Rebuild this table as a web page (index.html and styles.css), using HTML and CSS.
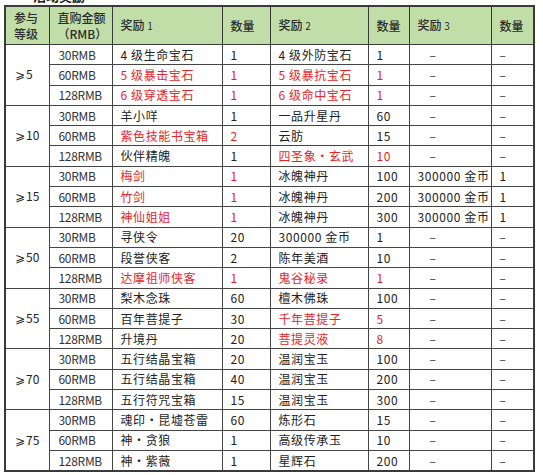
FILE: index.html
```html
<!DOCTYPE html>
<html lang="zh">
<head>
<meta charset="utf-8">
<link rel="stylesheet" href="styles.css">
</head>
<body>
<div class="caption"><span class="caption-text">活动奖励</span></div>
<table class="rewards">
  <colgroup>
    <col class="c1"><col class="c2"><col class="c3"><col class="c4"><col class="c5"><col class="c6"><col class="c7"><col class="c8">
  </colgroup>
  <thead>
    <tr>
      <th>参与<br>等级</th>
      <th>直购金额<br>（RMB）</th>
      <th>奖励 <span class="num">1</span></th>
      <th>数量</th>
      <th>奖励 <span class="num">2</span></th>
      <th>数量</th>
      <th>奖励 <span class="num">3</span></th>
      <th>数量</th>
    </tr>
  </thead>
  <tbody>
    <tr><td class="lvl" rowspan="3"><span class="ge">⩾</span>5</td><td class="rmb">30RMB</td><td>4 级生命宝石</td><td>1</td><td>4 级外防宝石</td><td>1</td><td class="dash3">–</td><td class="dash">–</td></tr>
    <tr><td class="rmb">60RMB</td><td class="red">5 级暴击宝石</td><td class="red">1</td><td class="red">5 级暴抗宝石</td><td class="red">1</td><td class="dash3">–</td><td class="dash">–</td></tr>
    <tr><td class="rmb">128RMB</td><td class="red">6 级穿透宝石</td><td class="red">1</td><td class="red">6 级命中宝石</td><td class="red">1</td><td class="dash3">–</td><td class="dash">–</td></tr>

    <tr><td class="lvl" rowspan="3"><span class="ge">⩾</span>10</td><td class="rmb">30RMB</td><td>羊小咩</td><td>1</td><td>一品升星丹</td><td>60</td><td class="dash3">–</td><td class="dash">–</td></tr>
    <tr><td class="rmb">60RMB</td><td class="red">紫色技能书宝箱</td><td class="red">2</td><td>云肪</td><td>15</td><td class="dash3">–</td><td class="dash">–</td></tr>
    <tr><td class="rmb">128RMB</td><td>伙伴精魄</td><td>1</td><td class="red">四圣象・玄武</td><td class="red">10</td><td class="dash3">–</td><td class="dash">–</td></tr>

    <tr><td class="lvl" rowspan="3"><span class="ge">⩾</span>15</td><td class="rmb">30RMB</td><td class="red">梅剑</td><td class="red">1</td><td>冰魄神丹</td><td>100</td><td>300000 金币</td><td>1</td></tr>
    <tr><td class="rmb">60RMB</td><td class="red">竹剑</td><td class="red">1</td><td>冰魄神丹</td><td>200</td><td>300000 金币</td><td>1</td></tr>
    <tr><td class="rmb">128RMB</td><td class="red">神仙姐姐</td><td class="red">1</td><td>冰魄神丹</td><td>300</td><td>300000 金币</td><td>1</td></tr>

    <tr><td class="lvl" rowspan="3"><span class="ge">⩾</span>50</td><td class="rmb">30RMB</td><td>寻侠令</td><td>20</td><td>300000 金币</td><td>1</td><td class="dash3">–</td><td class="dash">–</td></tr>
    <tr><td class="rmb">60RMB</td><td>段誉侠客</td><td>2</td><td>陈年美酒</td><td>10</td><td class="dash3">–</td><td class="dash">–</td></tr>
    <tr><td class="rmb">128RMB</td><td class="red">达摩祖师侠客</td><td class="red">1</td><td class="red">鬼谷秘录</td><td class="red">1</td><td class="dash3">–</td><td class="dash">–</td></tr>

    <tr><td class="lvl" rowspan="3"><span class="ge">⩾</span>55</td><td class="rmb">30RMB</td><td>梨木念珠</td><td>60</td><td>檀木佛珠</td><td>100</td><td class="dash3">–</td><td class="dash">–</td></tr>
    <tr><td class="rmb">60RMB</td><td>百年菩提子</td><td>30</td><td class="red">千年菩提子</td><td class="red">5</td><td class="dash3">–</td><td class="dash">–</td></tr>
    <tr><td class="rmb">128RMB</td><td>升境丹</td><td>20</td><td class="red">菩提灵液</td><td class="red">8</td><td class="dash3">–</td><td class="dash">–</td></tr>

    <tr><td class="lvl" rowspan="3"><span class="ge">⩾</span>70</td><td class="rmb">30RMB</td><td>五行结晶宝箱</td><td>20</td><td>温润宝玉</td><td>100</td><td class="dash3">–</td><td class="dash">–</td></tr>
    <tr><td class="rmb">60RMB</td><td>五行结晶宝箱</td><td>40</td><td>温润宝玉</td><td>200</td><td class="dash3">–</td><td class="dash">–</td></tr>
    <tr><td class="rmb">128RMB</td><td>五行符咒宝箱</td><td>15</td><td>温润宝玉</td><td>300</td><td class="dash3">–</td><td class="dash">–</td></tr>

    <tr><td class="lvl" rowspan="3"><span class="ge">⩾</span>75</td><td class="rmb">30RMB</td><td>魂印・昆墟苍雷</td><td>60</td><td>炼形石</td><td>15</td><td class="dash3">–</td><td class="dash">–</td></tr>
    <tr><td class="rmb">60RMB</td><td>神・贪狼</td><td>1</td><td>高级传承玉</td><td>10</td><td class="dash3">–</td><td class="dash">–</td></tr>
    <tr><td class="rmb">128RMB</td><td>神・紫薇</td><td>1</td><td>星辉石</td><td>200</td><td class="dash3">–</td><td class="dash">–</td></tr>
  </tbody>
</table>
</body>
</html>
```

FILE: styles.css
```css
html, body {
  margin: 0;
  padding: 0;
  background: #ffffff;
}

body {
  font-family: "Noto Sans CJK SC", "Noto Sans", sans-serif;
  font-size: 12px;
  color: #222222;
}

.caption {
  height: 4px;
  overflow: hidden;
  padding-left: 33px;
}

.caption-text {
  display: block;
  margin-top: -11px;
  line-height: 14px;
  font-size: 13px;
  font-weight: 700;
  color: #1a1a1a;
}

.rewards {
  margin-top: 1px;
  margin-left: 4px;
  border-collapse: collapse;
  table-layout: fixed;
  width: 530px;
  border: 2px solid #3a3a3a;
}

.c1 { width: 44px; }
.c2 { width: 63px; }
.c3 { width: 110px; }
.c4 { width: 48px; }
.c5 { width: 98px; }
.c6 { width: 41px; }
.c7 { width: 82px; }
.c8 { width: 43px; }

.rewards th {
  background: #c1dea9;
  height: 37px;
  padding: 0 0 0 8px;
  text-align: left;
  font-weight: 500;
  color: #2c2c2c;
  line-height: 16px;
  border: 1px solid #3a3a3a;
  vertical-align: middle;
}

.rewards th .num {
  font-size: 10px;
  font-weight: 400;
}

.rewards td {
  height: 19.3px;
  padding: 0 0 0 8px;
  line-height: 14px;
  border: 1px solid #454545;
  vertical-align: middle;
  white-space: nowrap;
  letter-spacing: 0.6px;
}

.rewards td.lvl {
  padding-left: 9px;
  border-left: 2px solid #3a3a3a;
  letter-spacing: 0;
}

.ge {
  font-family: "DejaVu Sans", sans-serif;
  font-size: 12px;
  margin-right: 1px;
}

.rewards td.rmb {
  color: #333333;
  letter-spacing: -0.3px;
  padding-left: 9px;
}

.rewards td.red {
  color: #e4262b;
}

.rewards td.dash3 {
  padding-left: 20px;
  color: #333333;
}

.rewards td.dash {
  color: #333333;
}
```
